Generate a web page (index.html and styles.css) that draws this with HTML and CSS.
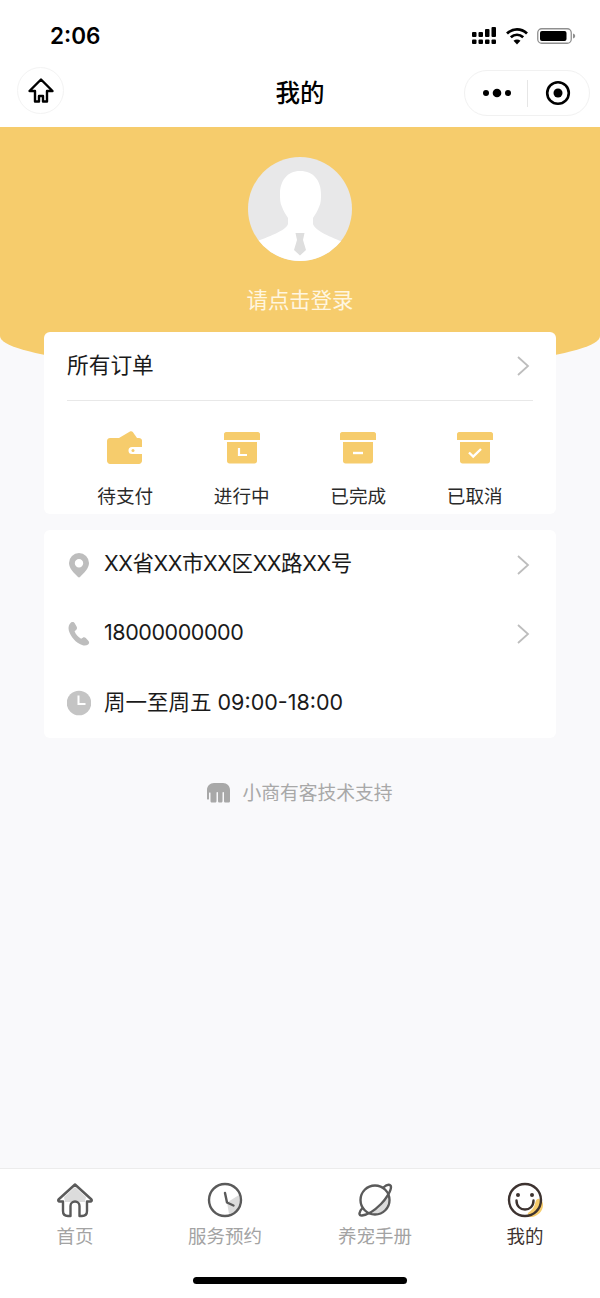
FILE: index.html
```html
<!DOCTYPE html>
<html lang="zh">
<head>
<meta charset="utf-8">
<title>我的</title>
<link rel="stylesheet" href="styles.css">
</head>
<body>
<div class="page">
  <div class="status">
    <span class="time">2:06</span>
    <div class="status-icons">
      <svg width="25" height="18" viewBox="0 0 25 18" fill="#000"><rect x="0" y="5" width="4.500" height="5" rx="1"/><rect x="0" y="12.500" width="4.500" height="4.500" rx="1"/><rect x="6.500" y="5" width="4.500" height="5" rx="1"/><rect x="6.500" y="12.500" width="4.500" height="4.500" rx="1"/><rect x="13" y="2" width="4.500" height="8" rx="1"/><rect x="13" y="12.500" width="4.500" height="4.500" rx="1"/><rect x="19.500" y="0" width="4.500" height="10" rx="1"/><rect x="19.500" y="12.500" width="4.500" height="4.500" rx="1"/></svg>
      <svg width="22" height="18" viewBox="0 0 22 18" fill="none" stroke="#000" stroke-width="2.800"><path d="M1 6.500C7 1 15 1 21 6.500"/><path d="M4.800 10.200c3.700-3.200 8.700-3.200 12.400 0"/><path d="M11 17.500l-3.500-3.800c2-1.500 5-1.500 7 0z" fill="#000" stroke="none"/></svg>
      <svg width="39" height="18" viewBox="0 0 39 18" fill="none"><rect x="0.750" y="1.750" width="33.500" height="14.500" rx="4" stroke="#8f8f8f" stroke-width="1.300"/><rect x="3" y="4" width="26.500" height="10" rx="2" fill="#000"/><path d="M36 6.500c1.500.4 2.200 1.400 2.200 2.500s-.7 2.100-2.200 2.500z" fill="#8f8f8f"/></svg>
    </div>
  </div>
  <div class="nav">
    <div class="nav-home">
      <svg width="28" height="28" viewBox="0 0 28 28" fill="none" stroke="#000" stroke-width="2.400" stroke-linejoin="round"><path d="M14 2.500L2.500 14H8v10.500h4V19h4v5.500h4V14h5.500z"/></svg>
    </div>
    <div class="nav-title">我的</div>
    <div class="capsule">
      <div class="capsule-part capsule-more">
        <svg width="28" height="12" viewBox="0 0 28 12" fill="#000"><circle cx="3" cy="6" r="3"/><circle cx="14" cy="6" r="4.300"/><circle cx="25" cy="6" r="3"/></svg>
      </div>
      <div class="capsule-line"></div>
      <div class="capsule-part">
        <svg width="26" height="26" viewBox="0 0 26 26"><circle cx="13" cy="13" r="10.800" fill="none" stroke="#000" stroke-width="2.600"/><circle cx="13" cy="13" r="4.500" fill="#000"/></svg>
      </div>
    </div>
  </div>

  <div class="hero">
    <svg class="avatar" width="104" height="104" viewBox="0 0 104 104">
      <defs><clipPath id="avatar-clip"><circle cx="52" cy="52" r="52"/></clipPath></defs>
      <circle cx="52" cy="52" r="52" fill="#e8e8e9"/>
      <g clip-path="url(#avatar-clip)">
        <path d="M52 14c14 0 21 10 21 23 0 5 0 9-2 13-1.500 4-4 8-6 11v6c2 7 18 13 32 19v22H5V86c14-6 33-12 35-19v-6c-2-3-4.500-7-6-11-2-4-2-8-2-13 0-13 7-23 20-23z" fill="#fff"/>
        <path d="M47.500 76h9L55 83l3 10-6 5.500L46 93l3-10z" fill="#dedede"/>
      </g>
    </svg>
    <div class="login">请点击登录</div>
  </div>

  <section class="card orders">
    <div class="orders-head">
      <span class="orders-title">所有订单</span>
      <svg class="chevron" width="14" height="22" viewBox="0 0 14 22" fill="none" stroke="#bdbdbd" stroke-width="1.800"><path d="M2 2l10 9-10 9"/></svg>
    </div>
    <div class="orders-grid">
      <div class="order-item">
        <svg width="36" height="36" viewBox="0 0 36 36"><path d="M12 8L23 1.500c1-.5 2-.3 2.800.5L30 8z" fill="#f6cc6c"/><path d="M3 8h29c1.500 0 3 1 3 2.500V17H25a3.500 3.500 0 0 0 0 7h10v7c0 1.500-1.500 3-3 3H3c-1.500 0-3-1.500-3-3V11c0-2 1.500-3 3-3z" fill="#f6cc6c"/><circle cx="26" cy="20.500" r="1.500" fill="#f6cc6c"/></svg>
        <span>待支付</span>
      </div>
      <div class="order-item">
        <svg width="36" height="36" viewBox="0 0 36 36"><use href="#box"/><path d="M15 18v7h8" fill="none" stroke="#fff" stroke-width="2.200"/></svg>
        <span>进行中</span>
      </div>
      <div class="order-item">
        <svg width="36" height="36" viewBox="0 0 36 36"><use href="#box"/><path d="M13 23h10" fill="none" stroke="#fff" stroke-width="2.400"/></svg>
        <span>已完成</span>
      </div>
      <div class="order-item">
        <svg width="36" height="36" viewBox="0 0 36 36"><use href="#box"/><path d="M12 22.500l4.200 4L24 19" fill="none" stroke="#fff" stroke-width="2.400"/></svg>
        <span>已取消</span>
      </div>
    </div>
  </section>

  <section class="card info">
    <div class="info-row">
      <svg class="info-icon" width="24" height="26" viewBox="0 0 24 26"><path fill-rule="evenodd" d="M12 1a10 10 0 0 1 10 10c0 5.500-5.500 10.500-9 14-.6.600-1.400.600-2 0C7.500 21.500 2 16.500 2 11A10 10 0 0 1 12 1zm0 6a4.200 4.200 0 1 0 0 8.400A4.200 4.200 0 0 0 12 7z" fill="#bdbdbd"/></svg>
      <span class="info-text info-tight">XX省XX市XX区XX路XX号</span>
      <svg class="chevron" width="14" height="22" viewBox="0 0 14 22" fill="none" stroke="#bdbdbd" stroke-width="1.800"><path d="M2 2l10 9-10 9"/></svg>
    </div>
    <div class="info-row">
      <svg class="info-icon" width="24" height="26" viewBox="0 0 24 26"><path d="M4 1.500c1.500-.8 3-.5 3.700.8l2 3.500c.6 1.200.3 2.300-.6 3.100l-1.500 1.300c1 3 3.500 6 6.500 7.500l1.700-1c1-.6 2.200-.4 3 .4l2.700 2.900c1 1.100.8 2.600-.4 3.500-1.500 1.200-3.700 1.500-6 .6C9 22 3.500 15.500 1.800 9.500 1 6 2 3 4 1.500z" fill="#bdbdbd"/></svg>
      <span class="info-text info-tight">18000000000</span>
      <svg class="chevron" width="14" height="22" viewBox="0 0 14 22" fill="none" stroke="#bdbdbd" stroke-width="1.800"><path d="M2 2l10 9-10 9"/></svg>
    </div>
    <div class="info-row">
      <svg class="info-icon" width="24" height="26" viewBox="0 0 24 26"><circle cx="12" cy="13" r="12.300" fill="#c4c4c4"/><path d="M11.500 5.500V14h7" fill="none" stroke="#fff" stroke-width="2"/></svg>
      <span class="info-text">周一至周五 09:00-18:00</span>
    </div>
  </section>

  <div class="support">
    <svg width="23" height="20" viewBox="0 0 23 20"><path fill-rule="evenodd" d="M7 0h9c4 0 7 3 7 7v11c0 1-.7 1.500-1.500 1.500h-3c-.8 0-1.500-.5-1.500-1.500V9.500c0-.8-1.500-.8-1.500 0V18c0 1-.7 1.500-1.500 1.500h-1.500c-.8 0-1.500-.5-1.500-1.500V9.500c0-.8-1.500-.8-1.500 0V18c0 1-.7 1.500-1.500 1.500H5c-.8 0-1.500-.5-1.500-1.500V10c0-.6-1.500-.6-1.500 0v6c0 .8-2 .8-2 0V7c0-4 3-7 7-7z" fill="#a8a8a8"/></svg>
    <span class="support-text">小商有客技术支持</span>
  </div>

  <nav class="tabbar">
    <div class="tabs">
      <div class="tab">
        <svg width="38" height="36" viewBox="0 0 38 36" fill="none"><path d="M19 5L30 15l-1 5H9l-1-5z" fill="#dcdcdc"/><path d="M19 2.500L2.500 17.500c-.8 1 0 2 1 2H7V29c0 3 2 5 5 5h2.500V24c0-2.500 2-4.500 4.500-4.500s4.500 2 4.500 4.500v10H26c3 0 5-2 5-5v-9.500h3.500c1 0 1.800-1 1-2z" stroke="#5a5a5a" stroke-width="2.400" stroke-linejoin="round"/></svg>
        <span>首页</span>
      </div>
      <div class="tab">
        <svg width="38" height="36" viewBox="0 0 38 36" fill="none"><path d="M21 20.500L33 13c1.500 5 1 10-2 14-2 3-5 4.500-8 5z" fill="#dcdcdc"/><circle cx="19" cy="18" r="16" stroke="#5a5a5a" stroke-width="2.400"/><path d="M19 11l2 9.500 6.500 3" stroke="#5a5a5a" stroke-width="2.400" stroke-linecap="round" stroke-linejoin="round"/></svg>
        <span>服务预约</span>
      </div>
      <div class="tab">
        <svg width="38" height="36" viewBox="0 0 38 36" fill="none"><path d="M32 13c2 8-3 19-14 19.500-3 0-4-1-5-1.500 4-2 10-5 13-9 3-3 5-6 6-9z" fill="#dcdcdc"/><circle cx="19" cy="18" r="14.500" stroke="#5a5a5a" stroke-width="2.400"/><path d="M6.500 26C2.500 30 2.500 33.800 6 33.500 12 33 20 27 25 22c5-5 10-13 10-17 0-3-4-3-7 0" stroke="#5a5a5a" stroke-width="2.400" stroke-linecap="round"/></svg>
        <span>养宠手册</span>
      </div>
      <div class="tab tab-active">
        <svg width="38" height="36" viewBox="0 0 38 36" fill="none"><path d="M33 17c3 1 4 3 4 6 0 6-5 11-11 12-3 .5-5-2-4-4 3-2 6-5 7-9 .5-3 2-6 4-5z" fill="#f6cc6c"/><circle cx="19" cy="18" r="16" stroke="#3d3330" stroke-width="2.400"/><circle cx="12" cy="13" r="2" fill="#3d3330"/><circle cx="26" cy="13" r="2" fill="#3d3330"/><path d="M10.500 18.500c0 6 4 9 8.500 9s8.500-3 8.500-9" stroke="#3d3330" stroke-width="2.400" stroke-linecap="round"/></svg>
        <span>我的</span>
      </div>
    </div>
    <div class="home-bar"></div>
  </nav>
</div>
<svg class="defs" width="0" height="0"><defs>
  <g id="box" fill="#f6cc6c"><path d="M2 2h32c1 0 2 1 2 2v6H0V4c0-1 1-2 2-2z"/><path d="M3 12h30v19c0 1.500-1 2.500-2.500 2.500h-25C4 33.500 3 32.500 3 31z"/></g>
</defs></svg>
</body>
</html>
```
FILE: styles.css
```css
* { box-sizing: border-box; }
html, body { margin: 0; padding: 0; }
body {
  width: 600px;
  height: 1298px;
  overflow: hidden;
  background: #f9f9fb;
  color: #1a1a1a;
  font-family: "Noto Sans CJK SC", sans-serif;
}
.defs { position: absolute; }
.page { display: flex; flex-direction: column; height: 1298px; }

.status {
  height: 60px;
  background: #fff;
  display: flex;
  align-items: flex-end;
  justify-content: space-between;
  padding: 0 24px 9px 50px;
}
.time { font-size: 22.500px; line-height: 30px; font-weight: 600; color: #000; font-family: "Inter", sans-serif; }
.status-icons { display: flex; align-items: center; gap: 9px; height: 30px; }

.nav {
  height: 67px;
  background: #fff;
  display: grid;
  grid-template-columns: 1fr auto 1fr;
  align-items: center;
  padding: 0 10px;
}
.nav-home {
  width: 47px;
  height: 47px;
  margin: 0 0 6px 7px;
  border: 1px solid #f3f3f3;
  border-radius: 50%;
  display: flex;
  align-items: center;
  justify-content: center;
}
.nav-title { font-size: 24.500px; line-height: 28px; margin-bottom: 4px; font-weight: 500; color: #000; }
.capsule {
  justify-self: end;
  width: 126px;
  height: 46px;
  margin-bottom: 1px;
  border: 1px solid #f1f1f1;
  border-radius: 23px;
  display: flex;
  align-items: center;
}
.capsule-part { flex: 1 1 0; display: flex; align-items: center; justify-content: center; }
.capsule-more svg { margin-left: 3px; }
.capsule-line { width: 1px; height: 27px; background: #e6e6e6; }

.hero {
  height: 245px;
  background: #f6cc6c;
  border-radius: 0 0 50% 50% / 0 0 36px 36px;
  padding-top: 30px;
  display: flex;
  flex-direction: column;
  align-items: center;
}
.login { margin-top: 24px; font-size: 21.400px; line-height: 28px; color: #fff6e0; }

.card { background: #fff; margin: 0 44px; border-radius: 6px; }
.orders { margin-top: -40px; height: 182px; padding: 0 23px; }
.orders-head {
  height: 69px;
  border-bottom: 1px solid #e8e8e8;
  display: flex;
  align-items: center;
  justify-content: space-between;
  padding-right: 3px;
}
.orders-title { font-size: 21.700px; line-height: 30px; margin-bottom: 4px; color: #1a1a1a; }
.orders-grid { display: grid; grid-template-columns: repeat(4, 1fr); padding-top: 29px; }
.order-item {
  display: flex;
  flex-direction: column;
  align-items: center;
  gap: 15px;
  font-size: 18.600px;
  line-height: 28px;
  color: #2a2a2a;
}
.info { margin-top: 16px; padding: 0 23px; display: grid; grid-auto-rows: 69.330px; }
.info-row { display: flex; align-items: center; padding-right: 3px; }
.info-icon { flex: none; margin-right: 13px; }
.info-text {
  flex: 1;
  font-family: "Inter", "Noto Sans CJK SC", sans-serif;
  font-size: 21.500px;
  line-height: 30px;
  margin-bottom: 3px;
  color: #1a1a1a;
}
.info-tight { letter-spacing: -0.430px; }

.support {
  margin-top: 42px;
  height: 26px;
  display: flex;
  align-items: center;
  justify-content: center;
  gap: 12px;
  font-size: 18.800px;
  line-height: 26px;
  color: #a8a8a8;
}
.support-text { margin-bottom: 2px; }

.tabbar {
  margin-top: auto;
  height: 130px;
  background: #fff;
  border-top: 1px solid #ececec;
  display: flex;
  flex-direction: column;
}
.tabs { display: grid; grid-template-columns: repeat(4, 1fr); padding-top: 13px; }
.tab {
  display: flex;
  flex-direction: column;
  align-items: center;
  font-size: 18.500px;
  line-height: 26px;
  color: #a3a3a3;
  gap: 4px;
}
.tab-active { color: #3d3330; }
.home-bar { width: 214px; height: 7px; margin: 29px auto 0; background: #000; border-radius: 4px; }
```
